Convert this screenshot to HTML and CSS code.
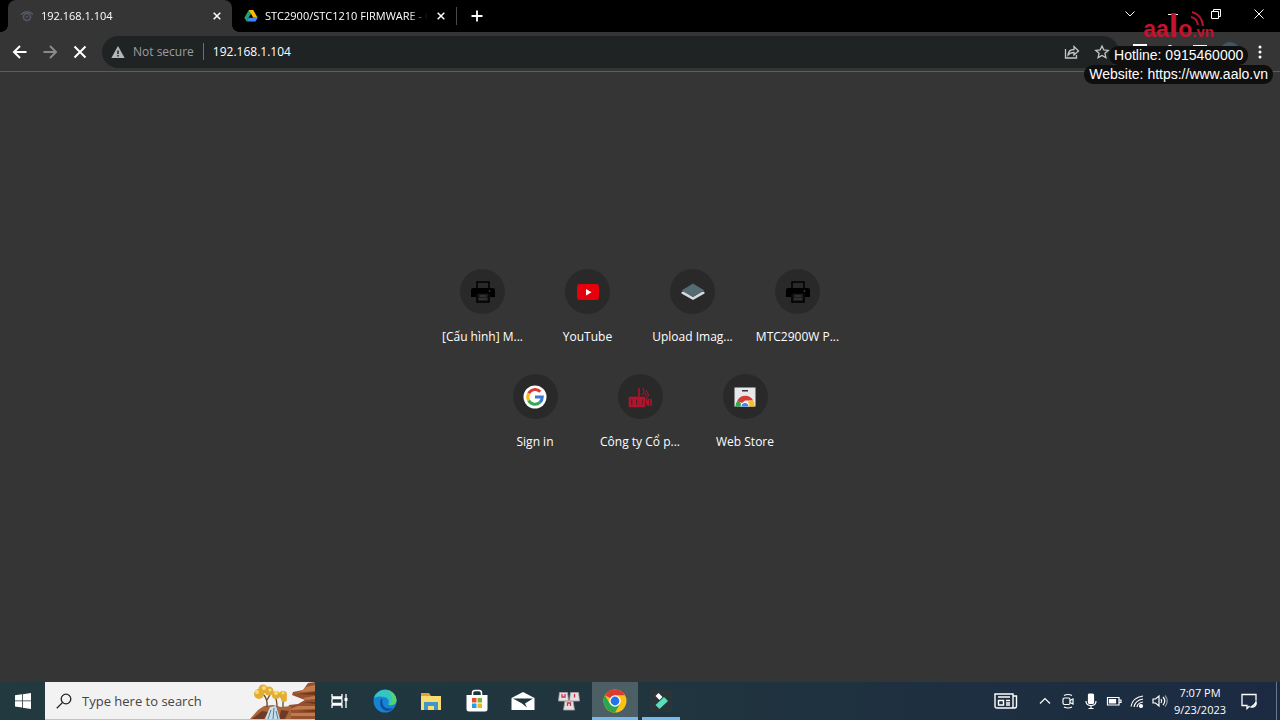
FILE: index.html
```html
<!DOCTYPE html>
<html lang="en">
<head>
    <meta charset="UTF-8">
    <meta name="viewport" content="width=device-width, initial-scale=1.0">
    <title>192.168.1.104</title>
    <link rel="stylesheet" href="styles.css">
</head>
<body>
    <header class="browser">
        <div class="tab-strip">
            <div class="tab active">
                <svg class="tab-icon" viewBox="0 0 14 14" fill="none" stroke="#555b66" stroke-width="1.5">
                    <path d="M1 5.500Q7 0 13 5.500"/>
                    <circle cx="7" cy="8" r="3.500"/>
                    <path d="M6 8.500l2-1.500"/>
                </svg>
                <span class="tab-title">192.168.1.104</span>
                <button class="tab-close" aria-label="Close tab"><svg viewBox="0 0 12 12"><path d="M2.700 2.700l6.600 6.600M9.300 2.700l-6.600 6.600"/></svg></button>
            </div>
            <div class="tab">
                <svg class="tab-icon" viewBox="0 0 14 14">
                    <path fill="#1ea362" d="M4.800 1h4.400L7 4.800 2.500 12.600.300 8.800z"/>
                    <path fill="#ffba00" d="M4.800 1h4.400l4.500 7.800H9.300z"/>
                    <path fill="#4285f4" d="M4.700 8.800h9l-2.200 3.800h-9z"/>
                </svg>
                <span class="tab-title">STC2900/STC1210 FIRMWARE - G</span>
                <button class="tab-close" aria-label="Close tab"><svg viewBox="0 0 12 12"><path d="M2.700 2.700l6.600 6.600M9.300 2.700l-6.600 6.600"/></svg></button>
            </div>
            <button class="new-tab" aria-label="New tab"><svg viewBox="0 0 12 12"><path d="M6 .500v11M.500 6h11"/></svg></button>
            <div class="window-controls">
                <button aria-label="Search tabs"><svg viewBox="0 0 12 12"><path d="M1.500 3.500L6 8l4.500-4.500"/></svg></button>
                <button aria-label="Minimize"><svg viewBox="0 0 12 12"><path d="M1 6.500h10"/></svg></button>
                <button aria-label="Restore"><svg viewBox="0 0 12 12"><path d="M1.500 3.500h7v7h-7zM3.500 3.500v-2h7v7h-2"/></svg></button>
                <button aria-label="Close"><svg viewBox="0 0 12 12"><path d="M1.500 1.500l9 9M10.500 1.500l-9 9"/></svg></button>
            </div>
        </div>

        <div class="toolbar">
            <button class="tool" aria-label="Back"><svg viewBox="0 0 16 16"><path d="M14.500 8H2M8 2L2 8l6 6"/></svg></button>
            <button class="tool disabled" aria-label="Forward"><svg viewBox="0 0 16 16"><path d="M1.500 8H14M8 2l6 6-6 6"/></svg></button>
            <button class="tool" aria-label="Stop"><svg viewBox="0 0 16 16"><path d="M2.500 2.500l11 11M13.500 2.500l-11 11"/></svg></button>
            <div class="omnibox">
                <svg class="warning" viewBox="0 0 14 14">
                    <path fill="#b4b7ba" d="M7 1l6.700 12H.300z"/>
                    <path stroke="#202324" stroke-width="1.500" d="M7 5.500v3.500M7 10v1.500"/>
                </svg>
                <label class="security" for="address">Not secure</label>
                <input class="address" id="address" type="text" value="192.168.1.104">
                <button class="tool thin" aria-label="Share"><svg viewBox="0 0 16 16"><path d="M1.500 5v9h11v-3M4 11q.500-5.500 6-5.500V2.500L14.500 7 10 11V8.500Q6 8.500 4 11z"/></svg></button>
                <button class="tool thin" aria-label="Bookmark"><svg viewBox="0 0 16 16"><path d="M8 2l1.800 4 4.400.400-3.300 2.900 1 4.300L8 11.400l-3.900 2.200 1-4.300-3.300-2.900L6.200 6z"/></svg></button>
            </div>
            <button class="tool" aria-label="Extension"><svg viewBox="0 0 16 16"><path fill="#fff" stroke="none" d="M1 0h14v14H1z"/></svg></button>
            <button class="tool" aria-label="Extensions"><svg viewBox="0 0 16 16"><path d="M2 5h4q0-3 2-3t2 3h4v9H2z"/></svg></button>
            <button class="tool" aria-label="Side panel"><svg viewBox="0 0 16 16"><path d="M2 2h12v12H2zM10 2v12"/></svg></button>
            <button class="tool" aria-label="Profile"><svg class="avatar" viewBox="0 0 20 20"><circle cx="10" cy="10" r="10" fill="#3c5963" stroke="none"/></svg></button>
            <button class="tool" aria-label="Menu"><svg viewBox="0 0 16 16"><g fill="#fff" stroke="none"><circle cx="8" cy="3" r="1.500"/><circle cx="8" cy="8" r="1.500"/><circle cx="8" cy="13" r="1.500"/></g></svg></button>
        </div>
    </header>

    <main class="new-tab-page">
        <nav class="shortcuts">
            <a class="shortcut" href="#">
                <span class="circle"><svg viewBox="0 0 24 24"><path d="M6 8V2h12v6" fill="none" stroke="#000" stroke-width="1.500"/><path d="M2 8h20q2 0 2 2v7h-5v-3H5v3H0v-7q0-2 2-2z"/><path d="M6 13h12v9H6z" fill="#1c1c1c" stroke="#000" stroke-width="1.500"/><path d="M9 16h6M8 19h8" stroke="#444"/><circle cx="18.500" cy="11" r="1" fill="#333"/></svg></span>
                <span class="name">[Cấu hình] M...</span>
            </a>
            <a class="shortcut" href="#">
                <span class="circle"><svg viewBox="0 0 24 24"><rect x="1" y="4" width="22" height="16" rx="3" fill="#e6000b"/><path d="M10 9v6.500l5.500-3.200z" fill="#fff"/></svg></span>
                <span class="name">YouTube</span>
            </a>
            <a class="shortcut" href="#">
                <span class="circle"><svg viewBox="0 0 24 24"><path d="M.500 12l2.500-.500 9 5.500 9-5.500 2.500.500v1.500L12 20 .500 13.500z" fill="#d6dbdd"/><path d="M12 3.500L23.500 10.500 12 17 .500 10.500z" fill="#546b72"/></svg></span>
                <span class="name">Upload Imag...</span>
            </a>
            <a class="shortcut" href="#">
                <span class="circle"><svg viewBox="0 0 24 24"><path d="M6 8V2h12v6" fill="none" stroke="#000" stroke-width="1.500"/><path d="M2 8h20q2 0 2 2v7h-5v-3H5v3H0v-7q0-2 2-2z"/><path d="M6 13h12v9H6z" fill="#1c1c1c" stroke="#000" stroke-width="1.500"/><path d="M9 16h6M8 19h8" stroke="#444"/><circle cx="18.500" cy="11" r="1" fill="#333"/></svg></span>
                <span class="name">MTC2900W P...</span>
            </a>
            <a class="shortcut" href="#">
                <span class="circle"><svg viewBox="0 0 24 24"><circle cx="12" cy="12" r="11.500" fill="#fff"/><g fill="none" stroke-width="3"><path d="M17.300 6.700A7.300 7.300 0 0 0 5.700 8.400" stroke="#d83a35"/><path d="M5.700 8.400a7.300 7.300 0 0 0 0 7.200" stroke="#fbbc05"/><path d="M5.700 15.600a7.300 7.300 0 0 0 11.200 1.800" stroke="#34a853"/><path d="M16.900 17.400A7.300 7.300 0 0 0 19.300 12H12" stroke="#3d78d8"/></g></svg></span>
                <span class="name">Sign in</span>
            </a>
            <a class="shortcut" href="#">
                <span class="circle"><svg viewBox="0 0 24 24"><g fill="none" stroke="#b3132c" stroke-width="2.500"><rect x="2" y="13" width="3.500" height="8"/><rect x="7" y="13" width="3.500" height="8"/><path d="M11 3v18" stroke-width="1.500"/><rect x="13" y="13" width="3" height="8"/><path d="M18 14l1.500 6 1-6v7M23 14v7" stroke-width="1.500"/><path d="M14.500 10q3-3 .500-7M17 8l3 6M18 5l3 6" stroke-width="1"/></g></svg></span>
                <span class="name">Công ty Cổ p...</span>
            </a>
            <a class="shortcut" href="#">
                <span class="circle"><svg viewBox="0 0 24 24"><path d="M1.500 2.500h21v19h-21z" fill="#e6e8ea"/><path d="M9 5h6v1.500H9z" fill="#333"/><path d="M2.500 21.500a9.500 9.500 0 0 1 3-7l4 7z" fill="#34a853"/><path d="M4.300 15.500a9 9 0 0 1 15.900 0H12L9 18z" fill="#d63c35"/><path d="M20.200 15.500q1.500 3 1.300 6H14l2-6z" fill="#fbc116"/><path d="M7.500 21.500a4.500 4.500 0 0 1 9 0z" fill="#fff"/><path d="M8.500 21.500a3.500 3.500 0 0 1 7 0z" fill="#4285f4"/></svg></span>
                <span class="name">Web Store</span>
            </a>
        </nav>
    </main>

    <footer class="taskbar">
        <button class="start" aria-label="Start"><svg viewBox="0 0 16 16" fill="#fff"><path d="M0 2.300l7-1v6.200H0zM7.800 1.200L16 0v7.500H7.800zM0 8.300h7v6.200l-7-1zM7.800 8.300H16V16l-8.200-1.200z"/></svg></button>
        <div class="search">
            <svg class="search-icon" viewBox="0 0 16 16" fill="none" stroke="#222" stroke-width="1.300"><circle cx="10" cy="6" r="4.800"/><path d="M6.600 9.400L.800 15.200"/></svg>
            <input type="text" class="search-input" placeholder="Type here to search" aria-label="Type here to search">
            <svg class="search-art" viewBox="0 0 68 37">
                <path fill="#94502f" d="M68 0l-7 1-5 7-10 2-1 3 13 5-7 4-9 1-4 14h30z"/>
                <path fill="#c07a4c" d="M68 3l-9 2-4 4-8 2 21-2zM68 14l-12 2 3 2 9-1zM68 24l-17 0-10 4 27-1zM68 31l-24 0-2 3 26 0z"/>
                <path fill="#6e3523" d="M68 10l-17 2 17 1zM68 20l-11 0 11 2zM68 28l-18 1 18 1z"/>
                <path fill="#a9653c" d="M3 37l8-9 6-4 9-1 8 2 10-1 0 13z"/>
                <path fill="#713a25" d="M5 37l10-8 6 1-4 7zM34 28l8 1-4 8h-6z"/>
                <path fill="none" stroke="#69452b" stroke-width="1.300" d="M20 25q1-8-4-13M20 18l4-7M30 25q0-7-2-10M36 25V15"/>
                <g fill="#e2ad33"><circle cx="12" cy="12" r="5"/><circle cx="16" cy="7" r="4.500"/><circle cx="22" cy="9" r="4.500"/><circle cx="29" cy="13" r="4"/><circle cx="36" cy="13" r="4"/><circle cx="37" cy="17" r="3"/></g>
                <g fill="#f7dd6b"><circle cx="10" cy="10" r="2"/><circle cx="17" cy="6" r="2"/><circle cx="23" cy="8" r="1.500"/><circle cx="29" cy="11" r="2"/><circle cx="36" cy="11" r="1.500"/></g>
                <path fill="#c8dfea" d="M23 25l6-1 4 13H18z"/>
                <path stroke="#4c7e9d" d="M24 28l-3 9M27 26l-1 11M29 29l2 8"/>
            </svg>
        </div>
        <button class="task task-view" aria-label="Task View"><svg viewBox="0 0 20 20" fill="none" stroke="#fff" stroke-width="1.300"><path d="M3 3v3h10V3M3 17v-3h10v3M3 7.500v5M13 7.500v5M3 7.500h10M3 12.500h10M17 3v14"/><path d="M15.500 8.500h3" stroke-width="3"/></svg></button>
        <button class="task" aria-label="Edge"><svg viewBox="0 0 24 24"><circle cx="12" cy="12" r="11.500" fill="#1683d4"/><path fill="#36c5c0" d="M1 9A11.500 11.500 0 0 1 23.500 11c.300 5-5.500 6.500-8.500 4.500 2-3 .500-7-4-7.500Q5 6.500 1 9z"/><path fill="#62d84e" d="M15 1Q23 4 23.500 11c0 4-4 5.500-7.500 5 5-3 4-9-1-15z" opacity=".75"/><path fill="#124e9c" d="M8 10q-3 7 3 11 5 2.500 9.500-2-8 2-10.500-3-1.500-3-.500-6z"/></svg></button>
        <button class="task" aria-label="File Explorer"><svg viewBox="0 0 24 24"><path fill="#dfa32e" d="M2 4h8l2 3h10v4H2z"/><path fill="#fadb74" d="M2 7h20v14H2z"/><path fill="#4196c9" d="M5 13h14v8h-4v-4H9v4H5z"/></svg></button>
        <button class="task" aria-label="Microsoft Store"><svg viewBox="0 0 24 24"><path fill="none" stroke="#fff" stroke-width="1.500" d="M7.500 7V4q0-2.500 2.500-2.500h4q2.500 0 2.500 2.500v3"/><path fill="#fff" d="M1.500 6h21v14q0 2.500-2.500 2.500H4Q1.500 22.500 1.500 20z"/><path fill="#e5502c" d="M7 9h4.500v4.500H7z"/><path fill="#7eb32c" d="M12.500 9H17v4.500h-4.500z"/><path fill="#249fdb" d="M7 14.500h4.500V19H7z"/><path fill="#f2b51d" d="M12.500 14.500H17V19h-4.500z"/></svg></button>
        <button class="task" aria-label="Mail"><svg viewBox="0 0 24 24"><path fill="#fff" d="M.500 9L12 3l11.500 6v12H.500z"/><path fill="#20363c" d="M2 9.500h20l-8 5 2 4-5-4z"/></svg></button>
        <button class="task" aria-label="Unikey"><svg viewBox="0 0 24 24"><g fill="#e6dfe0" stroke="#a7a1a4" stroke-width=".8"><path d="M2.500 3.500h8l1 8.500H1.500zM13.500 3.500h8l1 8.500h-10zM8 12h8l1.500 9h-11z"/></g><g stroke="#c93350" stroke-width="1.300" fill="none"><path d="M5 5v3h3V5M17.500 5v3.500M10.500 17v-3h3v3"/></g></svg></button>
        <button class="task running current" aria-label="Chrome"><svg viewBox="0 0 24 24"><circle cx="12" cy="12" r="11.500" fill="#fbc116"/><path fill="#de3b30" d="M12 12L2 6.300A11.500 11.500 0 0 1 22 6.300H12z"/><path fill="#2da44e" d="M2 6.300A11.500 11.500 0 0 0 12 23.500l5-8.600-5 2-5-2z"/><circle cx="12" cy="12" r="5.700" fill="#fff"/><circle cx="12" cy="12" r="4.400" fill="#2673e8"/></svg></button>
        <button class="task running background" aria-label="Filmora"><svg viewBox="0 0 24 24"><path fill="#2a353a" d="M1 1h22v22H1z"/><path fill="#fff" d="M9.500 4l4 4-3 3-4-4z"/><path fill="#56e0bd" d="M15 8l4 4-8.500 8-4-4z"/></svg></button>

        <div class="tray">
            <button class="news" aria-label="News"><svg viewBox="0 0 24 18" fill="none" stroke="#fff" stroke-width="1.400"><path d="M1 2h18v14H3q-2 0-2-2zM19 4h3.500v10q0 2-2 2H18M4 5h12M12 8.500h4M12 11h4M12 13h4"/><path d="M4.500 8.500h5v4.500h-5z"/></svg></button>
            <button class="tray-icon" aria-label="Show hidden icons"><svg viewBox="0 0 16 16"><path d="M3 10.500l5-5 5 5"/></svg></button>
            <button class="tray-icon" aria-label="Meet Now"><svg viewBox="0 0 16 16"><rect x="3" y="5" width="7" height="6.500" rx="1.500"/><path d="M10 7.500l3-1.500v5l-3-1.500M4 2.500q4-2 8 0M4 14q4 2 8 0"/></svg></button>
            <button class="tray-icon" aria-label="Microphone"><svg viewBox="0 0 16 16"><rect x="5.500" y="1" width="5" height="9.500" rx="1" fill="#fff"/><path d="M3 8q0 4.500 5 4.500T13 8M8 12.500V15M5.500 15.500h5"/></svg></button>
            <button class="tray-icon" aria-label="Battery"><svg viewBox="0 0 16 16"><path d="M1.500 4.500h11.500v7.500H1.500zM13.500 7h1.500v2.500h-1.500"/><path d="M3.500 6.500h6v3.500h-6z" fill="#fff"/></svg></button>
            <button class="tray-icon" aria-label="Wi-Fi"><svg viewBox="0 0 16 16"><path d="M2 13.500Q3.500 4.500 14 3M5 14q1-6.500 9-8M8 14q.500-4 6-5"/><circle cx="12" cy="13" r="1.500" fill="#fff"/></svg></button>
            <button class="tray-icon" aria-label="Volume"><svg viewBox="0 0 16 16"><path d="M1 6v4h2.500L7 13V3L3.500 6zM9 6q1.500 2 0 4M11 4q3.500 4 0 8"/><path d="M13 2.500q4.500 5.500 0 11" opacity=".5"/></svg></button>
            <div class="clock">
                <time datetime="19:07">7:07 PM</time>
                <time datetime="2023-09-23">9/23/2023</time>
            </div>
            <button class="notifications" aria-label="Notifications"><svg viewBox="0 0 18 18" fill="none" stroke="#fff" stroke-width="1.300"><path d="M9.500 14L7 16.500V13.500H2v-11h14v6M11 15a4 4 0 0 0 5-5q-1 3-5 5z"/></svg></button>
        </div>
    </footer>

    <!-- watermark -->
    <aside class="watermark">
        <div class="brand">
            <span class="brand-name">aa<span class="brand-tall">l</span>o</span><span class="brand-tld">.vn</span>
            <svg class="brand-waves" viewBox="0 0 16 16" fill="none" stroke="#b8122f" stroke-width="2"><path d="M3 1q10 3 11 14M2 6q6 1 7 8"/></svg>
        </div>
        <div class="line">Hotline: 0915460000</div>
        <div class="line">Website: https://www.aalo.vn</div>
    </aside>
</body>
</html>
```

FILE: styles.css
```css
* {
    box-sizing: border-box;
}
body {
    margin: 0;
    min-height: 100vh;
    display: flex;
    flex-direction: column;
    background-color: #353535;
    color: #fff;
    font-family: "Open Sans", "Noto Sans", sans-serif;
    font-size: 12px;
}
button {
    display: flex;
    align-items: center;
    justify-content: center;
    flex-shrink: 0;
    padding: 0;
    border: none;
    background: none;
    cursor: pointer;
}
input {
    min-width: 0;
    padding: 0;
    border: none;
    outline: none;
    background: none;
    font-family: inherit;
}
svg {
    display: block;
    flex-shrink: 0;
}

/* Tabs */
.tab-strip {
    display: flex;
    height: 32px;
    padding-left: 8px;
    background-color: #000;
}
.tab {
    position: relative;
    display: flex;
    align-items: center;
    gap: 7px;
    width: 224px;
    padding: 0 9px 1px 12px;
}
.tab.active {
    background-color: #353535;
    border-radius: 8px 8px 0 0;
}
.tab.active::before,
.tab.active::after {
    content: "";
    position: absolute;
    bottom: 0;
    width: 8px;
    height: 8px;
}
.tab.active::before {
    right: 100%;
    background: radial-gradient(circle at 0 0, #000 8px, #353535 8px);
}
.tab.active::after {
    left: 100%;
    background: radial-gradient(circle at 100% 0, #000 8px, #353535 8px);
}
.tab-icon {
    width: 14px;
    height: 14px;
}
.tab-title {
    flex: 1;
    overflow: hidden;
    white-space: nowrap;
    font-size: 11px;
    line-height: 15px;
    -webkit-mask-image: linear-gradient(to right, #000 88%, transparent);
    mask-image: linear-gradient(to right, #000 88%, transparent);
}
.tab-close svg,
.new-tab svg,
.window-controls svg {
    width: 12px;
    height: 12px;
    fill: none;
    stroke: #fff;
    stroke-width: 1;
}
.tab-close svg {
    stroke-width: 1.5;
}
.new-tab {
    width: 42px;
    position: relative;
}
.new-tab::before {
    content: "";
    position: absolute;
    left: 0;
    top: 7px;
    width: 1px;
    height: 18px;
    background-color: #4a4a4a;
}
.new-tab svg {
    stroke-width: 1.8;
}
.window-controls {
    display: flex;
    height: 27px;
    margin-left: auto;
}
.window-controls button {
    width: 43px;
}

/* Toolbar */
.toolbar {
    display: flex;
    align-items: center;
    height: 40px;
    padding: 0 5px;
    border-bottom: 1px solid #5c5c5c;
    background-color: #353535;
}
.tool {
    width: 30px;
    height: 30px;
}
.tool svg {
    width: 16px;
    height: 16px;
    fill: none;
    stroke: #fff;
    stroke-width: 2;
}
.tool .avatar {
    width: 20px;
    height: 20px;
}
.tool.disabled svg {
    stroke: #8a8a8a;
}
.tool.thin svg {
    stroke: #c6c6c6;
    stroke-width: 1.3;
}
.omnibox {
    flex: 1;
    display: flex;
    align-items: center;
    height: 32px;
    margin: 0 6px 0 7px;
    padding: 0 2px 0 9px;
    border-radius: 16px;
    background-color: #202324;
}
.warning {
    width: 14px;
    height: 14px;
}
.security {
    margin-left: 8px;
    padding-right: 9px;
    border-right: 1px solid #6c6e70;
    color: #9b9da0;
    font-size: 12px;
}
.address {
    flex: 1;
    margin-left: 9px;
    color: #fff;
    font-size: 12px;
}

/* Shortcuts */
.new-tab-page {
    flex: 1;
    display: flex;
    align-items: center;
    justify-content: center;
    padding-bottom: 20px;
}
.shortcuts {
    display: flex;
    flex-wrap: wrap;
    justify-content: center;
    width: 420px;
}
.shortcut {
    display: flex;
    flex-direction: column;
    align-items: center;
    gap: 14px;
    width: 105px;
    height: 105px;
    padding-top: 7px;
    color: #fff;
    text-decoration: none;
}
.circle {
    display: flex;
    align-items: center;
    justify-content: center;
    width: 45px;
    height: 45px;
    border-radius: 50%;
    background-color: #292929;
}
.circle svg {
    width: 24px;
    height: 24px;
}
.name {
    font-size: 12px;
    line-height: 18px;
    white-space: nowrap;
}

/* Taskbar */
.taskbar {
    display: flex;
    height: 38px;
    background: linear-gradient(to right, #22393f, #20353e 50%, #1b2a42);
}
.start {
    width: 45px;
}
.start svg {
    width: 16px;
    height: 16px;
}
.search {
    display: flex;
    align-items: center;
    width: 270px;
    padding-left: 11px;
    border-bottom: 1px solid #c2c2c2;
    background-color: #f2f2f2;
}
.search-icon {
    width: 16px;
    height: 16px;
    margin-right: 10px;
}
.search-input {
    flex: 1;
    color: #333;
    font-size: 13px;
}
.search-input::placeholder {
    color: #444;
}
.search-art {
    width: 68px;
    height: 37px;
}
.task {
    width: 46px;
    border-bottom: 3px solid transparent;
    border-top: 3px solid transparent;
}
.task svg {
    width: 24px;
    height: 24px;
}
.task-view {
    width: 47px;
}
.task-view svg {
    width: 20px;
    height: 20px;
}
.task.running {
    border-bottom-color: #76b9ed;
}
.task.current {
    background-color: #4b5f64;
    border-top-color: #4b5f64;
}
.task.background {
    width: 38px;
    margin: 0 4px;
}
.tray {
    display: flex;
    margin-left: auto;
    margin-right: 3px;
    padding-right: 7px;
    border-right: 1px solid #6b7688;
}
.news {
    width: 54px;
}
.news svg {
    width: 24px;
    height: 18px;
}
.tray-icon {
    width: 23px;
}
.tray-icon svg {
    width: 16px;
    height: 16px;
    fill: none;
    stroke: #fff;
    stroke-width: 1.2;
}
.clock {
    display: flex;
    flex-direction: column;
    align-items: center;
    justify-content: center;
    width: 58px;
    font-size: 11px;
    line-height: 17px;
}
.notifications {
    width: 40px;
}
.notifications svg {
    width: 18px;
    height: 18px;
}

/* Watermark */
.watermark {
    position: absolute;
    top: 8px;
    right: 7px;
    display: flex;
    flex-direction: column;
    align-items: center;
    font-family: "Liberation Sans", Arial, sans-serif;
    font-size: 14px;
}
.brand {
    position: relative;
    height: 38px;
    color: #c4122f;
    font-weight: bold;
    line-height: 34px;
}
.brand-name {
    font-size: 23px;
}
.brand-tall {
    font-size: 34px;
}
.brand-tld {
    font-size: 15px;
}
.brand-waves {
    position: absolute;
    top: 3px;
    right: 9px;
    width: 16px;
    height: 16px;
}
.line {
    padding: 0 5px;
    border-radius: 9px;
    background-color: #0e0e0e;
    line-height: 19px;
}
```
